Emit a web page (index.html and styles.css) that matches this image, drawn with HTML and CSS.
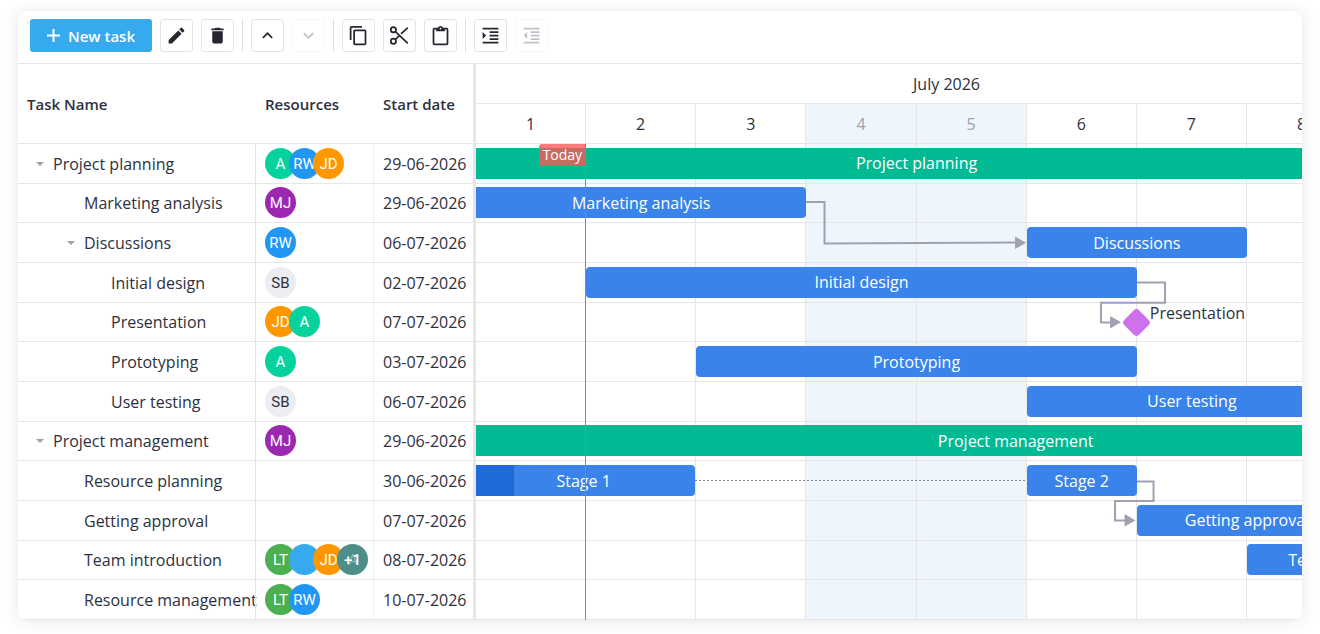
FILE: index.html
```html
<!DOCTYPE html>
<html lang="en">
<head>
<meta charset="utf-8">
<title>Project timeline</title>
<link rel="stylesheet" href="styles.css">
</head>
<body>
<main class="card">
  <div class="toolbar" role="toolbar" aria-label="Task actions">
    <button class="new-task" type="button"><svg class="plus" viewBox="0 0 13 13" aria-hidden="true"><path d="M6.500 0v13M0 6.500h13"/></svg>New task</button>
    <button class="tool" type="button" aria-label="Edit"><svg viewBox="0 0 24 24"><path d="M20.710 7.040c.39-.39.39-1.040 0-1.410l-2.340-2.340c-.37-.39-1.020-.39-1.410 0l-1.840 1.830 3.750 3.750zM3 17.250V21h3.750L17.810 9.930l-3.750-3.750z"/></svg></button>
    <button class="tool" type="button" aria-label="Delete"><svg viewBox="0 0 24 24"><path d="M19 4h-3.500l-1-1h-5l-1 1H5v2h14zM6 19a2 2 0 0 0 2 2h8a2 2 0 0 0 2-2V7H6z"/></svg></button>
    <span class="divider"></span>
    <button class="tool" type="button" aria-label="Move up"><svg viewBox="0 0 24 24"><path d="M7.410 15.410 12 10.830l4.590 4.580L18 14l-6-6-6 6z"/></svg></button>
    <button class="tool" type="button" aria-label="Move down" disabled><svg viewBox="0 0 24 24"><path d="M7.410 8.580 12 13.170l4.590-4.590L18 10l-6 6-6-6z"/></svg></button>
    <span class="divider"></span>
    <button class="tool" type="button" aria-label="Copy"><svg viewBox="0 0 24 24"><path d="M19 21H8V7h11m0-2H8a2 2 0 0 0-2 2v14a2 2 0 0 0 2 2h11a2 2 0 0 0 2-2V7a2 2 0 0 0-2-2m-3-4H4a2 2 0 0 0-2 2v14h2V3h12z"/></svg></button>
    <button class="tool" type="button" aria-label="Cut"><svg viewBox="0 0 24 24"><g class="line"><circle cx="5" cy="5.500" r="3"/><circle cx="5" cy="18.500" r="3"/><path d="M7.300 7.600 21.500 21M7.300 16.400l4-3.800M13.700 10.200 21.500 3"/></g></svg></button>
    <button class="tool" type="button" aria-label="Paste"><svg viewBox="0 0 24 24"><path d="M19 3h-4.180C14.400 1.840 13.300 1 12 1s-2.400.84-2.820 2H5a2 2 0 0 0-2 2v16a2 2 0 0 0 2 2h14a2 2 0 0 0 2-2V5a2 2 0 0 0-2-2m-7 0a1 1 0 1 1 0 2 1 1 0 0 1 0-2M7 7h10V5h2v16H5V5h2z"/></svg></button>
    <span class="divider"></span>
    <button class="tool" type="button" aria-label="Indent"><svg viewBox="0 0 24 24"><path d="M11 13h10v-2H11zM11 9h10V7H11zM3 3v2h18V3zM3 21h18v-2H3zM3 8v8l4-4zM11 17h10v-2H11z"/></svg></button>
    <button class="tool" type="button" aria-label="Outdent" disabled><svg viewBox="0 0 24 24"><path d="M11 13h10v-2H11zM11 9h10V7H11zM3 3v2h18V3zM3 21h18v-2H3zM7 8v8l-4-4zM11 17h10v-2H11z"/></svg></button>
  </div>
  <div class="gantt">
    <table class="tasks">
      <thead>
        <tr><th scope="col">Task Name</th><th scope="col">Resources</th><th scope="col">Start date</th></tr>
      </thead>
      <tbody>
        <tr><td class="name"><button class="caret" type="button" aria-label="Collapse Project planning"></button>Project planning</td><td><span class="avatar mint">A</span><span class="avatar blue">RW</span><span class="avatar orange">JD</span></td><td>29-06-2026</td></tr>
        <tr><td class="name leaf-2">Marketing analysis</td><td><span class="avatar purple">MJ</span></td><td>29-06-2026</td></tr>
        <tr><td class="name level-2"><button class="caret" type="button" aria-label="Collapse Discussions"></button>Discussions</td><td><span class="avatar blue">RW</span></td><td>06-07-2026</td></tr>
        <tr><td class="name leaf-3">Initial design</td><td><span class="avatar gray">SB</span></td><td>02-07-2026</td></tr>
        <tr><td class="name leaf-3">Presentation</td><td><span class="avatar orange">JD</span><span class="avatar mint">A</span></td><td>07-07-2026</td></tr>
        <tr><td class="name leaf-3">Prototyping</td><td><span class="avatar mint">A</span></td><td>03-07-2026</td></tr>
        <tr><td class="name leaf-3">User testing</td><td><span class="avatar gray">SB</span></td><td>06-07-2026</td></tr>
        <tr><td class="name"><button class="caret" type="button" aria-label="Collapse Project management"></button>Project management</td><td><span class="avatar purple">MJ</span></td><td>29-06-2026</td></tr>
        <tr><td class="name leaf-2">Resource planning</td><td></td><td>30-06-2026</td></tr>
        <tr><td class="name leaf-2">Getting approval</td><td></td><td>07-07-2026</td></tr>
        <tr><td class="name leaf-2">Team introduction</td><td><span class="avatar green">LT</span><span class="avatar sky"></span><span class="avatar orange">JD</span><span class="avatar more"><span class="under">A</span>+1</span></td><td>08-07-2026</td></tr>
        <tr><td class="name leaf-2">Resource management</td><td><span class="avatar green">LT</span><span class="avatar blue">RW</span></td><td>10-07-2026</td></tr>
      </tbody>
    </table>
    <div class="splitter"></div>
    <section class="timeline" aria-label="Timeline">
      <div class="scale">
        <div class="month">July 2026</div>
        <div class="day">1</div><div class="day">2</div><div class="day">3</div><div class="day weekend">4</div><div class="day weekend">5</div><div class="day">6</div><div class="day">7</div><div class="day">8</div>
      </div>
      <div class="chart">
        <div class="column c1"></div><div class="column c2"></div><div class="column c3"></div><div class="column c4 weekend"></div><div class="column c5 weekend"></div><div class="column c6"></div><div class="column c7"></div><div class="column c8"></div>
        <div class="line-row r1"></div><div class="line-row r2"></div><div class="line-row r3"></div><div class="line-row r4"></div><div class="line-row r5"></div><div class="line-row r6"></div><div class="line-row r7"></div><div class="line-row r8"></div><div class="line-row r9"></div><div class="line-row r10"></div><div class="line-row r11"></div><div class="line-row r12"></div>
        <svg class="links" viewBox="0 1 881 476" preserveAspectRatio="none" aria-hidden="true">
          <path class="link" d="M329 59h19.500v41.500l192-1"/>
          <path class="head" d="M539 93.500 550 99.700 539 106z"/>
          <path class="link" d="M661 139.500h28v20.300h-64V179.500h10"/>
          <path class="head" d="M634 173 645 179.200 634 185.500z"/>
          <path class="link" d="M660 338.500h17.500v19.500h-38.500v19.500h11"/>
          <path class="head" d="M648.500 371 659.500 377.500 648.500 383.500z"/>
          <path class="split" d="M219 337.500h332"/>
        </svg>
        <div class="bar project r1 s1 n8 from-left">Project planning</div>
        <div class="bar r2 s1 n3 from-left">Marketing analysis</div>
        <div class="bar r3 s6 n2">Discussions</div>
        <div class="bar r4 s2 n5">Initial design</div>
        <div class="milestone r5"><span class="diamond"></span><span class="caption">Presentation</span></div>
        <div class="bar r6 s3 n4">Prototyping</div>
        <div class="bar r7 s6 n3">User testing</div>
        <div class="bar project r8 s1 n10 from-left">Project management</div>
        <div class="bar r9 s1 n2 from-left partial">Stage 1</div>
        <div class="bar r9 s6 n1">Stage 2</div>
        <div class="bar r10 s7 n2">Getting approval</div>
        <div class="bar r11 s8 n2">Team introduction</div>
        <div class="today"><span class="today-tag">Today</span></div>
      </div>
    </section>
  </div>
</main>
</body>
</html>
```
FILE: styles.css
```css
* { box-sizing: border-box; }

body {
  margin: 0;
  padding: 11px 18px 14px;
  min-height: 100vh;
  display: flex;
  background: #fff;
  color: #2e303e;
  font: 16px/20px "Open Sans", sans-serif;
}

.card {
  flex: 1;
  min-width: 900px;
  display: flex;
  flex-direction: column;
  background: #fff;
  border-radius: 9px;
  overflow: hidden;
  box-shadow: 0 1px 16px rgba(0, 0, 0, .11);
}

/* Toolbar */
.toolbar {
  display: flex;
  align-items: center;
  gap: 8px;
  padding: 8px 12px 11px;
  border-bottom: 1px solid #e6e6e6;
}
.new-task {
  display: flex;
  align-items: center;
  justify-content: center;
  gap: 8px;
  width: 122px;
  height: 33px;
  padding: 0;
  border: 0;
  border-radius: 3px;
  background: #37a9ef;
  color: #fff;
  font: 600 15px/20px "Open Sans", sans-serif;
}
.plus { width: 13px; height: 13px; fill: none; stroke: #fff; stroke-width: 2; }
.tool {
  display: flex;
  align-items: center;
  justify-content: center;
  width: 33px;
  height: 33px;
  padding: 0;
  border: 1px solid #e4e4e6;
  border-radius: 3px;
  background: #fff;
}
.tool svg { width: 21px; height: 21px; fill: #25262f; }
.tool .line { fill: none; stroke: #25262f; stroke-width: 2; }
.tool:disabled { border-color: #f6f6f7; }
.tool:disabled svg { fill: #bfc0c9; }
.divider { width: 1px; height: 33px; background: #dfdfe1; }

/* Task table */
.gantt { flex: 1; display: flex; }
.tasks {
  display: grid;
  grid-template-columns: 237px 118px 100px;
  grid-template-rows: 80px repeat(12, minmax(36px, 1fr));
}
.tasks thead, .tasks tbody, .tasks tr { display: contents; }
.tasks th, .tasks td {
  display: flex;
  align-items: center;
  padding: 0 0 0 9px;
  border-bottom: 1px solid #e6e6e6;
  white-space: nowrap;
}
.tasks th { font-size: 15px; font-weight: 600; }
.tasks td + td { border-left: 1px solid #f0f0f0; }
.tasks td:nth-child(2) { border-left-color: #e4e4e4; }
.tasks th + th { padding-left: 10px; }
.tasks td:nth-child(3) { padding-top: 1px; }
.tasks .name { padding: 1px 0 0 9px; }
.tasks .level-2 { padding-left: 40px; }
.tasks .leaf-2 { padding-left: 66px; }
.tasks .leaf-3 { padding-left: 93px; }
.caret {
  display: grid;
  place-items: center;
  width: 26px;
  height: 20px;
  padding: 0;
  border: 0;
  background: none;
}
.caret::before {
  content: "";
  border: 4px solid transparent;
  border-top-color: #9fa1ae;
  border-bottom: 0;
}

.avatar {
  position: relative;
  flex: none;
  display: grid;
  place-items: center;
  width: 31px;
  height: 31px;
  padding-top: 1px;
  border-radius: 50%;
  color: #fff;
  font: 15px/20px Roboto, sans-serif;
}
.avatar + .avatar { margin-left: -7px; }
.mint { background: #06d29e; }
.blue { background: #2196f3; }
.orange { background: #ff9800; }
.purple { background: #9c27b0; }
.green { background: #4caf50; }
.sky { background: #37a9ef; }
.gray { background: #ebedf2; color: #2e303e; }
.more { background: #4c8f8a; font-weight: 500; }
.under { position: absolute; left: 11px; top: 6px; opacity: .35; font-weight: 400; }

.splitter { width: 3px; background: #e6e6e6; }

/* Timeline: seven and a half days fit the visible width */
.timeline {
  flex: 1;
  min-width: 0;
  overflow: hidden;
  display: flex;
  flex-direction: column;
}
.scale, .chart {
  display: grid;
  grid-template-columns: repeat(10, 1fr);
  width: calc(100% * 10 / 7.5);
}
.scale { grid-template-rows: 40px 40px; }
.month {
  grid-column: 1 / span 8;
  display: grid;
  place-items: center;
  padding-left: 60px;
  border-bottom: 1px solid #e6e6e6;
}
.day {
  grid-row: 2;
  display: grid;
  place-items: center;
  border-right: 1px solid #e6e6e6;
  border-bottom: 1px solid #e6e6e6;
}
.weekend { background: #eff5fc; color: #9fa1ae; }

.chart {
  position: relative;
  flex: 1;
  grid-template-rows: repeat(12, minmax(36px, 1fr));
}
.column { grid-row: 1 / -1; border-right: 1px solid #e6e6e6; }
.line-row { grid-column: 1 / -1; border-bottom: 1px solid #e6e6e6; }

.c1 { grid-column: 1; } .c2 { grid-column: 2; } .c3 { grid-column: 3; } .c4 { grid-column: 4; }
.c5 { grid-column: 5; } .c6 { grid-column: 6; } .c7 { grid-column: 7; } .c8 { grid-column: 8; }

.r1 { grid-row: 1; } .r2 { grid-row: 2; } .r3 { grid-row: 3; } .r4 { grid-row: 4; }
.r5 { grid-row: 5; } .r6 { grid-row: 6; } .r7 { grid-row: 7; } .r8 { grid-row: 8; }
.r9 { grid-row: 9; } .r10 { grid-row: 10; } .r11 { grid-row: 11; } .r12 { grid-row: 12; }

.s1 { grid-column-start: 1; } .s2 { grid-column-start: 2; } .s3 { grid-column-start: 3; }
.s6 { grid-column-start: 6; } .s7 { grid-column-start: 7; } .s8 { grid-column-start: 8; }
.n1 { grid-column-end: span 1; } .n2 { grid-column-end: span 2; } .n3 { grid-column-end: span 3; }
.n4 { grid-column-end: span 4; } .n5 { grid-column-end: span 5; } .n8 { grid-column-end: span 8; }
.n10 { grid-column-end: span 10; margin-right: 22px; }

.bar {
  align-self: center;
  display: grid;
  place-items: center;
  height: 31px;
  margin-bottom: 1px;
  border-radius: 4px;
  background: #3983eb;
  color: #fff;
  white-space: nowrap;
}
.bar.project { background: #00ba94; }
.from-left { border-top-left-radius: 0; border-bottom-left-radius: 0; }
.partial {
  margin-right: 1px;
  padding-right: 4px;
  background: linear-gradient(to right, #1f69da 38px, #3983eb 38px);
}

.milestone {
  grid-column: 7 / span 2;
  position: relative;
  display: flex;
  align-items: flex-start;
  padding-left: 13px;
}
.diamond {
  position: absolute;
  left: -11px;
  top: 9px;
  width: 21px;
  height: 21px;
  border-radius: 4px;
  background: #cf70ee;
  transform: rotate(45deg);
}

.links {
  grid-column: 1 / span 8;
  grid-row: 1 / -1;
  width: 100%;
  height: 100%;
  min-height: 0;
  contain: size;
}
.link { fill: none; stroke: #a0a0b1; stroke-width: 2; }
.head { fill: #a0a0b1; }
.split { fill: none; stroke: #83848f; stroke-width: 1; stroke-dasharray: 2 2; }

.today {
  position: absolute;
  z-index: 2;
  left: 10%;
  top: 0;
  bottom: 0;
  width: 1px;
  margin-left: -1px;
  background: #f5585b;
}
.today-tag {
  position: absolute;
  right: 0;
  top: 0;
  padding: 1px 4px;
  border-radius: 3px 0 0 3px;
  background: rgba(255, 84, 84, .78);
  color: #fff;
  font-size: 14px;
}
```
